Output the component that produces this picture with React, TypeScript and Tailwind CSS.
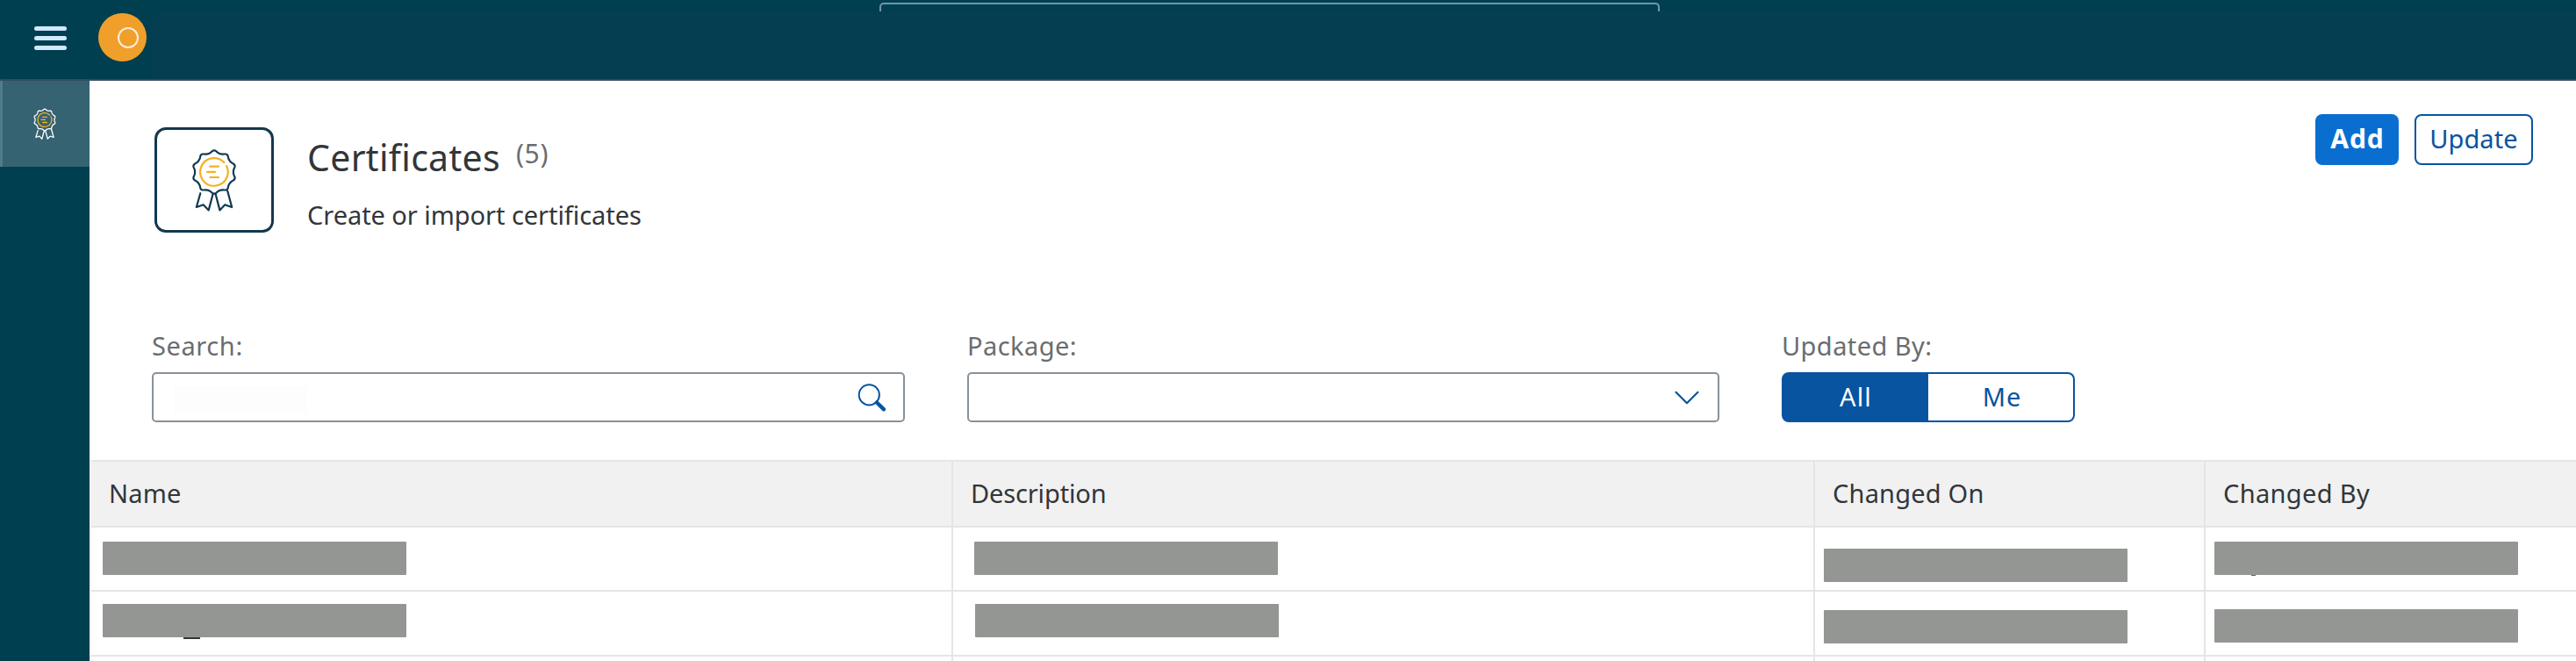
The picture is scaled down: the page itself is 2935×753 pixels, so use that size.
import type { ReactNode } from "react";

const scallop =
  Array.from({ length: 120 }, (_, i) => {
    const a = (i / 120) * Math.PI * 2;
    const r = 23.1 + 1.4 * Math.cos(10 * a) + 0.25 * Math.cos(20 * a);
    return `${i ? "L" : "M"}${(r * Math.sin(a)).toFixed(2)} ${(-r * Math.cos(a)).toFixed(2)}`;
  }).join("") + "Z";

function Medal({ className }: { className: string }) {
  return (
    <svg viewBox="-26 -27 52 72" fill="none" strokeLinecap="round" strokeLinejoin="round" className={className}>
      <g stroke="currentColor">
        <path d={scallop} />
        <path d="M-15.7 24.2 L-20.2 40 L-12.3 37.2 L-6.3 43.4 L-1.4 25" />
        <path d="M1.6 25 L6.4 43.4 L12.3 37.2 L20.2 40 L15.2 21.5" />
      </g>
      <g className="stroke-[#f5b021]">
        <path d="M11.3 -11 A15.8 15.8 0 1 0 14.1 -7" />
        <path d="M-4.8 -6.3 H5 M-8 -0.2 H1 M-4.6 6 H5" />
      </g>
    </svg>
  );
}

function TopBar() {
  return (
    <header className="flex h-[92px] shrink-0 border-b-2 border-[#354a5f] bg-[#003f50]">
      <div className="flex w-[175px] shrink-0">
        <button className="ml-[39px] mt-[30px] flex h-[27px] w-[37px] flex-col justify-between">
          <span className="h-[5px] w-full rounded-full bg-[#d1e8ff]" />
          <span className="h-[5px] w-full rounded-full bg-[#d1e8ff]" />
          <span className="h-[5px] w-full rounded-full bg-[#d1e8ff]" />
        </button>
        <div className="ml-9 mt-[15px] flex size-[55px] items-center justify-end rounded-full bg-[#f09f2b] pr-[9px]">
          <span className="size-6 rounded-full border-2 border-[#fdeed8]" />
        </div>
      </div>
      <div className="flex grow flex-col">
        <div className="ml-[827px] mt-[3px] h-[10px] w-[889px] shrink-0 rounded-t-[5px] border-2 border-b-0 border-[#7394ac]" />
        <div className="grow bg-[#053d51]" />
      </div>
    </header>
  );
}

function Field({ label, className, children }: { label: string; className: string; children: ReactNode }) {
  return (
    <div className="flex flex-col gap-[10px]">
      <label className={`h-10 text-[29px] leading-[40px] text-[#6a6d70] ${className}`}>{label}</label>
      {children}
    </div>
  );
}

function Cell({ className, children }: { className: string; children?: ReactNode }) {
  return <div className={`border-b-2 border-r-2 border-[#e5e5e5] last:border-r-0 ${className}`}>{children}</div>;
}

function Bar({ children }: { children?: ReactNode }) {
  return <div className="relative h-[38px] w-[346px] rounded-[1px] bg-[#949694]">{children}</div>;
}

const columns = "grid grid-cols-[982px_982px_445px_1fr]";

export default function App() {
  return (
    <div className="flex h-[753px] w-full flex-col overflow-hidden bg-white font-['Noto_Sans',sans-serif] text-[#32363a]">
      <TopBar />
      <div className="flex min-h-0 grow">
        <nav className="w-[102px] shrink-0 bg-[#003f50]">
          <div className="flex h-[98px] items-center justify-center border-l-[3px] border-[#527c88] bg-[#356372] pb-[1px] pr-[3px]">
            <Medal className="h-9 w-[26px] stroke-[2.6] text-white" />
          </div>
        </nav>
        <main className="flex min-w-0 grow flex-col">
          <section className="flex h-[282px] shrink-0 pl-[74px] pr-[49px]">
            <div className="mt-[53px] flex h-[120px] w-[136px] shrink-0 items-center justify-center rounded-[13px] border-[3px] border-[#12384f]">
              <Medal className="h-[72px] w-[52px] stroke-[2.2] text-[#12384f]" />
            </div>
            <div className="ml-[38px] mt-[59px] grow">
              <div className="flex h-14 items-start">
                <h1 className="text-[41px] leading-[56px] tracking-[0.3px]">Certificates</h1>
                <span className="ml-[18px] mt-[3px] text-[30px] leading-[41px] tracking-[0.7px] text-[#6a6d70]">(5)</span>
              </div>
              <p className="mt-[18px] text-[29px] leading-[40px] tracking-[-0.05px]">Create or import certificates</p>
            </div>
            <div className="mt-[38px] flex h-[58px] gap-[18px]">
              <button className="w-[95px] rounded-lg bg-[#0a6ed1] pb-[2px] pl-[1px] text-[30px] font-bold leading-[40px] tracking-[0.9px] text-white">Add</button>
              <button className="w-[135px] rounded-lg border-2 border-[#0854a0] pb-[2px] text-[29px] leading-[40px] tracking-[0.1px] text-[#0854a0]">Update</button>
            </div>
          </section>

          <section className="flex h-[150px] shrink-0 gap-[71px] pl-[71px]">
            <Field label="Search:" className="tracking-[0.6px]">
              <div className="flex h-[57px] w-[858px] items-center justify-between rounded-[5px] border-2 border-[#89919a] pl-[23px] pr-[20px]">
                <span className="mt-[6px] h-[31px] w-[152px] bg-[#fdfdfd]" />
                <svg viewBox="0 0 32 32" fill="none" className="size-8 stroke-[#0854a0]">
                  <circle cx="13.3" cy="12.8" r="11.6" strokeWidth="2" />
                  <path d="M22 21.5 L30 29.3" strokeWidth="4.4" strokeLinecap="round" />
                </svg>
              </div>
            </Field>
            <Field label="Package:" className="tracking-[0.45px]">
              <div className="flex h-[57px] w-[857px] items-center justify-end rounded-[5px] border-2 border-[#89919a] pr-[21px]">
                <svg viewBox="0 0 28 16" fill="none" className="h-4 w-7 stroke-[#0854a0]">
                  <path d="M1.5 1.8 L14 14.2 L26.5 1.8" strokeWidth="2.2" strokeLinecap="round" strokeLinejoin="round" />
                </svg>
              </div>
            </Field>
            <Field label="Updated By:" className="tracking-[0.42px]">
              <div className="flex h-[57px] w-[334px] text-[29px] leading-[40px]">
                <button className="w-[167px] rounded-l-lg bg-[#0854a0] pb-[1px] pl-[2px] tracking-[1.2px] text-white">All</button>
                <button className="w-[167px] rounded-r-lg border-2 border-l-0 border-[#0854a0] pb-[1px] pl-[3px] tracking-[0.8px] text-[#0854a0]">Me</button>
              </div>
            </Field>
          </section>

          <section className="flex min-h-0 grow flex-col border-l-2 border-[#f3f3f3]">
            <div className={`${columns} h-[77px] shrink-0 border-t-2 border-[#e5e5e5] bg-[#f1f1f1] text-[29px] leading-[40px]`}>
              <Cell className="pl-[20px] pt-[16px] tracking-[0.2px]">Name</Cell>
              <Cell className="pl-[20px] pt-[16px] tracking-[-0.14px]">Description</Cell>
              <Cell className="pl-[20px] pt-[16px] tracking-[0.2px]">Changed On</Cell>
              <Cell className="pl-[20px] pt-[16px] tracking-[0.35px]">Changed By</Cell>
            </div>
            <div className={`${columns} h-[73px] shrink-0`}>
              <Cell className="pl-[13px] pt-[16px]"><Bar /></Cell>
              <Cell className="pl-[24px] pt-[16px]"><Bar /></Cell>
              <Cell className="pl-[10px] pt-[24px]"><Bar /></Cell>
              <Cell className="pl-[10px] pt-[16px]">
                <Bar>
                  <span className="absolute left-[42px] top-[38px] h-px w-[5px] bg-[#2f6fb5]" />
                </Bar>
              </Cell>
            </div>
            <div className={`${columns} h-[74px] shrink-0`}>
              <Cell className="pl-[13px] pt-[14px]">
                <Bar>
                  <span className="absolute left-[92px] top-[38px] h-[2px] w-[19px] bg-[#32363a]" />
                </Bar>
              </Cell>
              <Cell className="pl-[25px] pt-[14px]"><Bar /></Cell>
              <Cell className="pl-[10px] pt-[21px]"><Bar /></Cell>
              <Cell className="pl-[10px] pt-[20px]"><Bar /></Cell>
            </div>
            <div className={`${columns} h-[73px] shrink-0`}>
              <Cell className="" />
              <Cell className="" />
              <Cell className="" />
              <Cell className="" />
            </div>
          </section>
        </main>
      </div>
    </div>
  );
}
